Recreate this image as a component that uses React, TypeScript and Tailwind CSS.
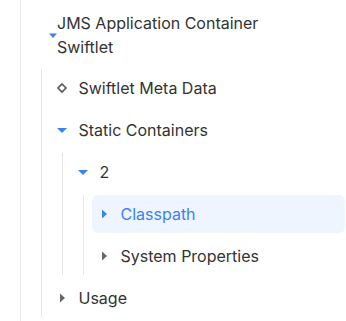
import React from "react";

const Down = ({ color }: { color: string }) => (
  <svg width="16" height="16" viewBox="0 0 16 16" className="shrink-0">
    <path d="M3 6 L13 6 L8 11 Z" fill={color} />
  </svg>
);

const Right = ({ color }: { color: string }) => (
  <svg width="16" height="16" viewBox="0 0 16 16" className="shrink-0">
    <path d="M6 3.5 L11 8 L6 12.5 Z" fill={color} />
  </svg>
);

const Diamond = () => (
  <svg width="16" height="16" viewBox="0 0 16 16" className="shrink-0">
    <path d="M8 4 L12 8 L8 12 L4 8 Z" fill="none" stroke="#555" strokeWidth="1.6" />
  </svg>
);

const Row = ({
  icon,
  label,
  active = false,
}: {
  icon: React.ReactNode;
  label: string;
  active?: boolean;
}) => (
  <div
    className={
      "flex items-center h-[38px] rounded-[6px] pl-[4px] gap-[8.5px] " +
      (active ? "bg-[#eef5ff] text-[#3b82f6]" : "text-[#333333]")
    }
  >
    {icon}
    <span className="text-[16px] leading-[24px] whitespace-nowrap">{label}</span>
  </div>
);

const Children = ({ children }: { children: React.ReactNode }) => (
  <div className="ml-[12px] border-l border-[#e6e6e6] pl-[8px] flex flex-col gap-[4px]">
    {children}
  </div>
);

export default function App() {
  return (
    <div
      className="w-[346px] h-[321px] overflow-hidden bg-white"
      style={{ fontFamily: "Inter, 'Noto Sans', sans-serif" }}
    >
      <div className="ml-[20px] w-[325px] h-[321px] border-l border-[#e6e6e6] pl-[8px] pt-[11px]">
        <div className="flex items-center pl-[20px] text-[#333333]">
          <svg width="8" height="6" viewBox="0 0 8 6" className="shrink-0 mt-[1px]">
            <path d="M0 0.5 L8 0.5 L4 5 Z" fill="#3b82f6" />
          </svg>
          <span className="text-[16px] leading-[24px]">
            JMS Application Container
            <br />
            Swiftlet
          </span>
        </div>
        <div className="mt-[10px]">
          <Children>
            <Row icon={<Diamond />} label="Swiftlet Meta Data" />
            <Row icon={<Down color="#3b82f6" />} label="Static Containers" />
            <Children>
              <Row icon={<Down color="#3b82f6" />} label="2" />
              <Children>
                <Row icon={<Right color="#3b82f6" />} label="Classpath" active />
                <Row icon={<Right color="#666666" />} label="System Properties" />
              </Children>
            </Children>
            <Row icon={<Right color="#666666" />} label="Usage" />
          </Children>
        </div>
      </div>
    </div>
  );
}
